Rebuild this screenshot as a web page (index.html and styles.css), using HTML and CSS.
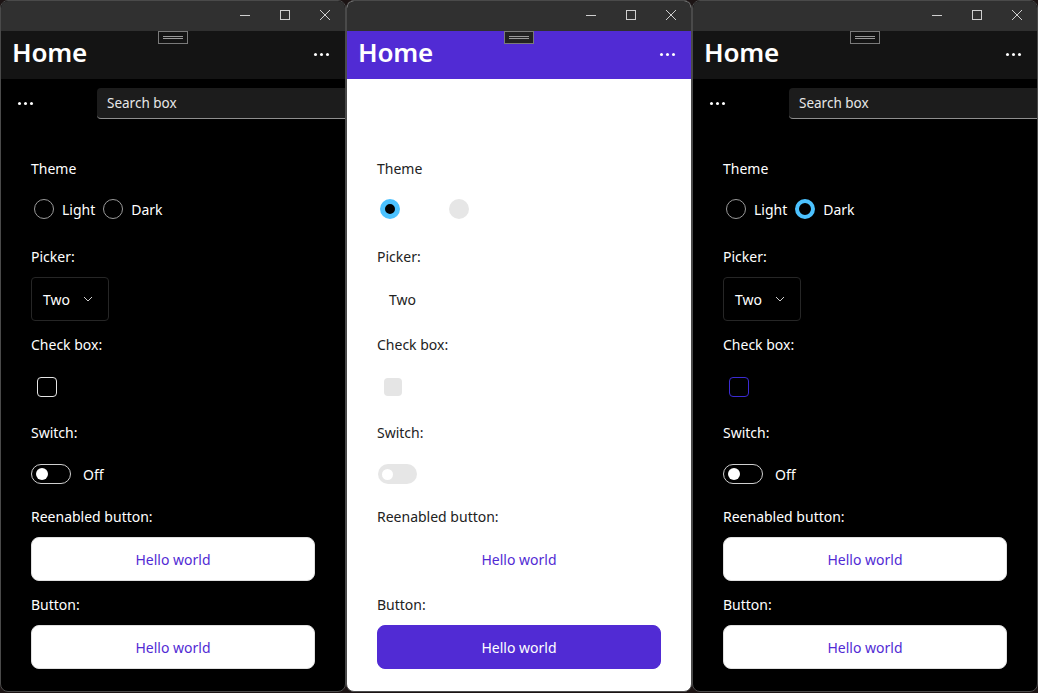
FILE: index.html
```html
<!DOCTYPE html>
<html lang="en">
<head>
    <meta charset="UTF-8">
    <meta name="viewport" content="width=device-width, initial-scale=1.0">
    <title>Home - Three Windows</title>
    <link rel="stylesheet" href="styles.css">
</head>
<body>
    <!-- Window 1: dark theme, nothing selected -->
    <div class="win dark">
        <div class="titlebar">
            <span class="cap"><svg width="12" height="12" viewBox="0 0 12 12"><path d="M1 6.5h10" stroke="#cfcfcf" stroke-width="1"/></svg></span>
            <span class="cap"><svg width="12" height="12" viewBox="0 0 12 12"><rect x="1.5" y="1.5" width="9" height="9" fill="none" stroke="#cfcfcf" stroke-width="1"/></svg></span>
            <span class="cap"><svg width="12" height="12" viewBox="0 0 12 12"><path d="M1 1l10 10M11 1L1 11" stroke="#cfcfcf" stroke-width="1"/></svg></span>
        </div>
        <header class="appbar">
            <h1>Home</h1>
            <span class="dots"><i></i><i></i><i></i></span>
            <span class="grip"><i></i><i></i></span>
        </header>
        <div class="toolbar">
            <span class="tool-dots"><i></i><i></i><i></i></span>
            <div class="search">Search box</div>
        </div>
        <main class="content">
            <section class="field">
                <p class="label">Theme</p>
                <div class="radios">
                    <span class="radio"></span><span class="radio-text">Light</span>
                    <span class="radio"></span><span class="radio-text">Dark</span>
                </div>
            </section>
            <section class="field">
                <p class="label">Picker:</p>
                <div class="picker">
                    <span>Two</span>
                    <svg class="chev" width="10" height="6" viewBox="0 0 10 6"><path d="M1 1l4 4 4-4" fill="none" stroke="#cfcfcf" stroke-width="1"/></svg>
                </div>
            </section>
            <section class="field">
                <p class="label">Check box:</p>
                <div class="row"><span class="check"></span></div>
            </section>
            <section class="field">
                <p class="label">Switch:</p>
                <div class="row switch-row"><span class="switch"><i></i></span><span class="switch-text">Off</span></div>
            </section>
            <section class="field">
                <p class="label">Reenabled button:</p>
                <button class="btn">Hello world</button>
            </section>
            <section class="field">
                <p class="label">Button:</p>
                <button class="btn">Hello world</button>
            </section>
        </main>
    </div>

    <!-- Window 2: light theme -->
    <div class="win light">
        <div class="titlebar">
            <span class="cap"><svg width="12" height="12" viewBox="0 0 12 12"><path d="M1 6.5h10" stroke="#cfcfcf" stroke-width="1"/></svg></span>
            <span class="cap"><svg width="12" height="12" viewBox="0 0 12 12"><rect x="1.5" y="1.5" width="9" height="9" fill="none" stroke="#cfcfcf" stroke-width="1"/></svg></span>
            <span class="cap"><svg width="12" height="12" viewBox="0 0 12 12"><path d="M1 1l10 10M11 1L1 11" stroke="#cfcfcf" stroke-width="1"/></svg></span>
        </div>
        <header class="appbar">
            <h1>Home</h1>
            <span class="dots"><i></i><i></i><i></i></span>
            <span class="grip"><i></i><i></i></span>
        </header>
        <div class="toolbar"></div>
        <main class="content">
            <section class="field">
                <p class="label">Theme</p>
                <div class="radios">
                    <span class="radio on"></span><span class="radio-text">Light</span>
                    <span class="radio"></span><span class="radio-text">Dark</span>
                </div>
            </section>
            <section class="field">
                <p class="label">Picker:</p>
                <div class="picker">
                    <span>Two</span>
                </div>
            </section>
            <section class="field">
                <p class="label">Check box:</p>
                <div class="row"><span class="check"></span></div>
            </section>
            <section class="field">
                <p class="label">Switch:</p>
                <div class="row switch-row"><span class="switch"><i></i></span></div>
            </section>
            <section class="field">
                <p class="label">Reenabled button:</p>
                <button class="btn">Hello world</button>
            </section>
            <section class="field">
                <p class="label">Button:</p>
                <button class="btn primary">Hello world</button>
            </section>
        </main>
    </div>

    <!-- Window 3: dark theme, Dark selected -->
    <div class="win dark">
        <div class="titlebar">
            <span class="cap"><svg width="12" height="12" viewBox="0 0 12 12"><path d="M1 6.5h10" stroke="#cfcfcf" stroke-width="1"/></svg></span>
            <span class="cap"><svg width="12" height="12" viewBox="0 0 12 12"><rect x="1.5" y="1.5" width="9" height="9" fill="none" stroke="#cfcfcf" stroke-width="1"/></svg></span>
            <span class="cap"><svg width="12" height="12" viewBox="0 0 12 12"><path d="M1 1l10 10M11 1L1 11" stroke="#cfcfcf" stroke-width="1"/></svg></span>
        </div>
        <header class="appbar">
            <h1>Home</h1>
            <span class="dots"><i></i><i></i><i></i></span>
            <span class="grip"><i></i><i></i></span>
        </header>
        <div class="toolbar">
            <span class="tool-dots"><i></i><i></i><i></i></span>
            <div class="search">Search box</div>
        </div>
        <main class="content">
            <section class="field">
                <p class="label">Theme</p>
                <div class="radios">
                    <span class="radio"></span><span class="radio-text">Light</span>
                    <span class="radio on"></span><span class="radio-text">Dark</span>
                </div>
            </section>
            <section class="field">
                <p class="label">Picker:</p>
                <div class="picker">
                    <span>Two</span>
                    <svg class="chev" width="10" height="6" viewBox="0 0 10 6"><path d="M1 1l4 4 4-4" fill="none" stroke="#cfcfcf" stroke-width="1"/></svg>
                </div>
            </section>
            <section class="field">
                <p class="label">Check box:</p>
                <div class="row"><span class="check focus"></span></div>
            </section>
            <section class="field">
                <p class="label">Switch:</p>
                <div class="row switch-row"><span class="switch"><i></i></span><span class="switch-text">Off</span></div>
            </section>
            <section class="field">
                <p class="label">Reenabled button:</p>
                <button class="btn">Hello world</button>
            </section>
            <section class="field">
                <p class="label">Button:</p>
                <button class="btn">Hello world</button>
            </section>
        </main>
    </div>
</body>
</html>
```
FILE: styles.css
```css
* {
    margin: 0;
    padding: 0;
    box-sizing: border-box;
}

body {
    font-family: "Noto Sans", "Open Sans", sans-serif;
    font-size: 14px;
    background: #1c1414;
    display: flex;
    height: 693px;
    overflow: hidden;
}

/* Window frame */
.win {
    width: 346px;
    height: 692px;
    border: 1px solid #4a4a4a;
    border-radius: 8px;
    overflow: hidden;
    display: flex;
    flex-direction: column;
}

.win.dark {
    background: #000;
    color: #fff;
}

.win.light {
    background: #fff;
    color: #222;
}

.titlebar {
    height: 30px;
    background: #303030;
    display: flex;
    justify-content: flex-end;
    align-items: center;
}

.cap {
    width: 40px;
    display: flex;
    justify-content: center;
    align-items: center;
    padding-bottom: 2px;
}

/* App header */
.appbar {
    height: 48px;
    display: flex;
    align-items: center;
    justify-content: space-between;
    padding: 0 16px 0 11px;
    position: relative;
}

.dark .appbar {
    background: #141414;
}

.light .appbar {
    background: #512bd4;
}

.appbar h1 {
    font-size: 26px;
    font-weight: 600;
    color: #fff;
    letter-spacing: -0.2px;
    margin-bottom: 6px;
}

.dots,
.tool-dots {
    display: flex;
    gap: 3px;
}

.dots i,
.tool-dots i {
    width: 3px;
    height: 3px;
    background: #fff;
    border-radius: 50%;
}

.dots {
    margin-bottom: 2px;
}

.grip {
    position: absolute;
    top: 0;
    left: 50%;
    transform: translateX(-50%);
    width: 30px;
    height: 13px;
    border: 1px solid #7a7a7a;
    display: flex;
    flex-direction: column;
    justify-content: center;
    align-items: center;
    gap: 1px;
}

.light .grip {
    background: #222;
}

.grip i {
    width: 20px;
    height: 1px;
    background: #9a9a9a;
}

/* Secondary toolbar */
.toolbar {
    height: 49px;
    display: flex;
    align-items: flex-start;
    padding-top: 9px;
}

.tool-dots {
    flex: 0 0 48px;
    height: 31px;
    justify-content: center;
    align-items: center;
}

.search {
    margin-left: 48px;
    flex: 0 0 260px;
    height: 31px;
    background: #1c1c1c;
    border-radius: 4px 0 0 4px;
    border-bottom: 1px solid #8e8e8e;
    padding: 6px 10px 5px;
    color: #e8e8e8;
    font-size: 13.5px;
}

/* Form content */
.content {
    padding: 31px 30px 0;
    display: flex;
    flex-direction: column;
    gap: 14px;
}

.field {
    display: flex;
    flex-direction: column;
    gap: 10px;
}

.label {
    height: 20px;
    line-height: 20px;
}

.radios {
    height: 40px;
    margin-bottom: 4px;
    display: flex;
    align-items: center;
    padding-left: 3px;
    gap: 8px;
}

.radio {
    width: 20px;
    height: 20px;
    border-radius: 50%;
    border: 1px solid #9a9a9a;
}

.light .radio {
    border: none;
    background: #e6e6e6;
}

.radio.on,
.light .radio.on {
    border: 4px solid #4cc2ff;
    background: #000;
}

.light .radio.on {
    border-width: 5px;
}

.light .radio-text {
    color: #fff;
}

.picker {
    width: 78px;
    height: 44px;
    border: 1px solid #262626;
    border-radius: 4px;
    display: flex;
    align-items: center;
    justify-content: space-between;
    padding: 0 15px 0 11px;
}

.light .picker {
    border-color: #fff;
}

.row {
    height: 44px;
    display: flex;
    align-items: center;
}

.check {
    width: 20px;
    height: 20px;
    margin-left: 6px;
    border: 1px solid #e6e6e6;
    border-radius: 4px;
}

.check.focus {
    border-color: #3c2bd4;
}

.light .check {
    width: 18px;
    height: 18px;
    margin-left: 7px;
    border: none;
    background: #e5e5e5;
}

.switch-row {
    height: 42px;
    margin-bottom: -2px;
    gap: 12px;
}

.switch {
    width: 40px;
    height: 20px;
    border: 1px solid #cfcfcf;
    border-radius: 10px;
    display: flex;
    align-items: center;
    padding-left: 4px;
}

.switch i {
    width: 12px;
    height: 12px;
    border-radius: 50%;
    background: #fff;
}

.light .switch {
    border: none;
    background: #e6e6e6;
    width: 39px;
    margin-left: 1px;
}

.light .switch i {
    width: 11px;
    height: 11px;
}

.btn {
    height: 44px;
    border: 1px solid #e0e0e0;
    border-radius: 8px;
    background: #fff;
    color: #512bd4;
    font-family: inherit;
    font-size: 14px;
}

.light .btn {
    border-color: #fff;
}

.light .btn.primary {
    background: #512bd4;
    border-color: #512bd4;
    color: #fff;
}
```
